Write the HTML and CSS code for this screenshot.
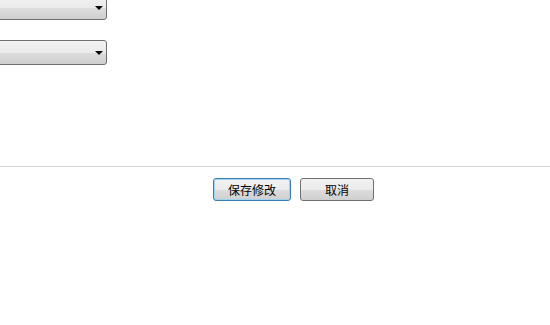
FILE: index.html
```html
<!DOCTYPE html>
<html>
<head>
<meta charset="utf-8">
<link rel="stylesheet" href="styles.css">
</head>
<body>
<div class="page">
  <div class="fields">
    <div class="select first"><span class="value"></span><span class="arrow"></span></div>
    <div class="select"><span class="value"></span><span class="arrow"></span></div>
  </div>
  <div class="divider"></div>
  <div class="actions">
    <button class="btn btn-save">保存修改</button>
    <button class="btn btn-cancel">取消</button>
  </div>
</div>
</body>
</html>
```

FILE: styles.css
```css
html, body {
  margin: 0;
  padding: 0;
  background: #ffffff;
  overflow: hidden;
}
body {
  font-family: "Noto Sans CJK SC", "Noto Sans", sans-serif;
}
.page {
  width: 550px;
  height: 325px;
}
.fields {
  display: flex;
  flex-direction: column;
  gap: 20px;
  margin-top: -5px;
  height: 171px;
  box-sizing: border-box;
}
.select {
  width: 121px;
  height: 25px;
  margin-left: -14px;
  box-sizing: border-box;
  border: 1px solid #707070;
  border-radius: 3px;
  background: linear-gradient(to bottom, #f2f2f2 0%, #ebebeb 50%, #dddddd 51%, #cfcfcf 100%);
  display: flex;
  align-items: center;
  justify-content: flex-end;
  padding-right: 3px;
}
.arrow {
  width: 0;
  height: 0;
  border-left: 4px solid transparent;
  border-right: 4px solid transparent;
  border-top: 4px solid #000;
  margin-top: 1px;
}
.divider {
  height: 1px;
  background: #d3d3d3;
}
.actions {
  display: flex;
  gap: 9px;
  padding-left: 213px;
  margin-top: 11px;
}
.btn {
  height: 23px;
  box-sizing: border-box;
  border: 1px solid #707070;
  border-radius: 3px;
  background: linear-gradient(to bottom, #f2f2f2 0%, #ebebeb 50%, #dddddd 51%, #cfcfcf 100%);
  font-family: "Noto Sans CJK SC", sans-serif;
  font-size: 12px;
  color: #000;
  padding: 0;
  line-height: 20px;
}
.btn-save {
  width: 78px;
  border-color: #3c7fb1;
  box-shadow: inset 0 0 0 1px #9fd3f0;
}
.btn-cancel {
  width: 74px;
}
```
